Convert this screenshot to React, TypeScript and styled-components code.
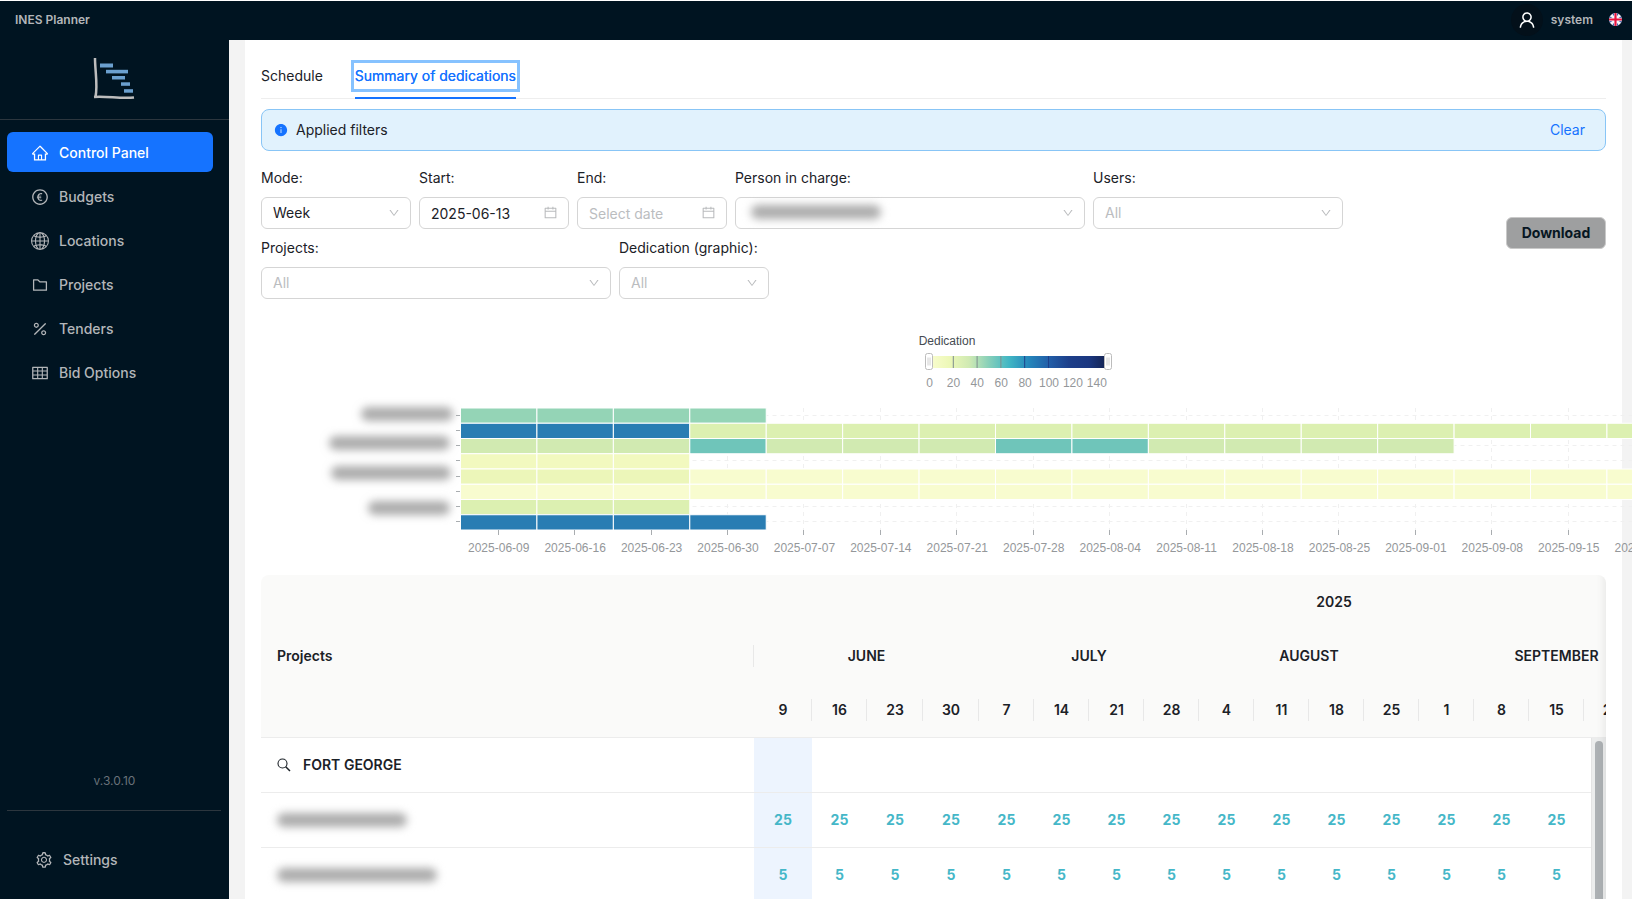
import React from "react";
import styled, { createGlobalStyle } from "styled-components";
import {
  AiFillInfoCircle,
  AiOutlineCalendar,
  AiOutlineDown,
  AiOutlineEuroCircle,
  AiOutlineFolder,
  AiOutlineHome,
  AiOutlinePercentage,
  AiOutlineSetting,
  AiOutlineTable,
  AiOutlineUser,
} from "react-icons/ai";
import { BsGlobe2 } from "react-icons/bs";

const GlobalStyle = createGlobalStyle`
  *, *::before, *::after { box-sizing: border-box; }
  body {
    margin: 0;
    background: #ffffff;
    color: #1b2127;
    font: 400 14px/22px Inter, "Liberation Sans", sans-serif;
  }
  button, input, select { font: inherit; color: inherit; margin: 0; }
`;

const Page = styled.div`
  display: flex;
  flex-direction: column;
  height: 100vh;
  overflow: hidden;
  border-top: 1px solid #ffffff;
`;

const Header = styled.header`
  display: flex;
  align-items: center;
  justify-content: space-between;
  flex: none;
  height: 39px;
  padding: 0 10px 2px 15px;
  background: #001421;
  color: #b3b6b9;
  font-size: 12px;
  font-weight: 600;
`;

const HeaderTools = styled.div`
  display: flex;
  align-items: center;
`;

const Avatar = styled.span`
  display: grid;
  place-items: center;
  width: 32px;
  height: 32px;
  border-radius: 50%;
  background: #03101a;
  color: #ffffff;
  font-size: 20px;
`;

const UserName = styled.span`
  margin: 0 16px 0 8px;
`;

const Body = styled.div`
  display: flex;
  flex: 1;
  min-height: 0;
`;

const Sidebar = styled.aside`
  display: flex;
  flex-direction: column;
  flex: none;
  width: 229px;
  background: #001421;
`;

const LogoArea = styled.div`
  display: flex;
  justify-content: center;
  height: 80px;
  padding-top: 17px;
  border-bottom: 1px solid #2c363e;
`;

const Nav = styled.nav`
  display: flex;
  flex-direction: column;
  gap: 4px;
  flex: 1;
  padding: 12px 16px 0 7px;
`;

const NavLink = styled.a<{ $active?: boolean }>`
  display: flex;
  align-items: center;
  gap: 10px;
  height: 40px;
  padding: 1px 0 0 24px;
  border-radius: 6px;
  background: ${(p) => (p.$active ? "#1573ff" : "transparent")};
  color: ${(p) => (p.$active ? "#ffffff" : "#b3b6b9")};
  font-weight: 500;
  text-decoration: none;

  svg { font-size: 18px; flex: none; }
`;

const Version = styled.div`
  padding-bottom: 18px;
  color: #69727a;
  font-size: 12px;
  text-align: center;
`;

const SidebarFooter = styled.div`
  margin: 0 8px 0 7px;
  padding: 28px 4px 20px;
  border-top: 1px solid #2c363e;
`;

const Main = styled.main`
  flex: 1;
  min-width: 0;
  padding: 0 10px 0 16px;
  overflow: hidden;
  background: #f3f3f3;
`;

const Card = styled.div`
  min-height: 100%;
  padding: 12px 16px 0;
  background: #ffffff;
`;

const Tabs = styled.div`
  display: flex;
  gap: 32px;
  margin-bottom: 10px;
  border-bottom: 1px solid #eeeeee;
`;

const Tab = styled.button<{ $active?: boolean }>`
  position: relative;
  height: 46px;
  padding: 2px 0 0;
  border: 0;
  background: none;
  color: ${(p) => (p.$active ? "#1573ff" : "#1b2127")};
  text-shadow: ${(p) => (p.$active ? "0 0 0 currentcolor" : "none")};

  span {
    display: block;
    padding: 1px 0;
    outline: ${(p) => (p.$active ? "3px solid #86c2ff" : "none")};
    outline-offset: 1px;
  }

  &::after {
    content: "";
    position: absolute;
    inset: auto 0 -1px;
    height: 2px;
    background: ${(p) => (p.$active ? "#1573ff" : "transparent")};
  }
`;

const Alert = styled.div`
  display: flex;
  align-items: center;
  gap: 8px;
  height: 42px;
  padding: 0 20px 0 12px;
  border: 1px solid #88c5f6;
  border-radius: 8px;
  background: #e1f2fd;

  svg { color: #1573ff; }
`;

const ClearButton = styled.button`
  margin-left: auto;
  padding: 0;
  border: 0;
  background: none;
  color: #1573ff;
`;

const FilterBar = styled.div`
  display: flex;
  align-items: center;
  gap: 16px;
  margin: 16px 0 30px;
`;

const Filters = styled.form`
  display: flex;
  flex: 1;
  flex-wrap: wrap;
  gap: 8px;
`;

const Field = styled.div<{ $width: number }>`
  display: flex;
  flex-direction: column;
  gap: 8px;
  width: ${(p) => p.$width}px;
`;

const Control = styled.div<{ $muted?: boolean }>`
  position: relative;
  color: ${(p) => (p.$muted ? "#bbbdbf" : "#1b2127")};

  select, input {
    display: block;
    width: 100%;
    height: 32px;
    padding: 0 11px;
    border: 1px solid #d5d5d5;
    border-radius: 6px;
    background: #ffffff;
    appearance: none;
  }
  input::placeholder { color: #bbbdbf; opacity: 1; }

  > svg {
    position: absolute;
    top: 10px;
    right: 11px;
    color: #b9bbbd;
    font-size: 12px;
    pointer-events: none;
  }
  > input + svg { top: 8px; font-size: 15px; }
`;

const Redacted = styled.span<{ $width: number }>`
  display: block;
  width: ${(p) => p.$width}px;
  height: 14px;
  border-radius: 7px;
  background: #acacac;
  filter: blur(4px);
`;

const SelectValue = styled.div`
  position: absolute;
  top: 8px;
  left: 16px;
  pointer-events: none;
`;

const DownloadButton = styled.button`
  width: 100px;
  height: 32px;
  padding: 0;
  border: 1px solid #c9c9c9;
  border-radius: 6px;
  background: #9e9fa0;
  color: #071622;
  font-weight: 700;
`;

const ChartArea = styled.div`
  height: 246px;

  svg { display: block; overflow: visible; }
  text { font: 12px "Liberation Sans", Arial, sans-serif; text-anchor: middle; }
`;

const TableWrap = styled.div`
  position: relative;
  overflow: hidden;
  border-radius: 8px 8px 0 0;
`;

const EdgeShadow = styled.div`
  position: absolute;
  inset: 0 0 0 auto;
  width: 10px;
  box-shadow: inset -10px 0 8px -8px rgba(5, 5, 5, 0.08);
`;

const ScrollTrack = styled.div`
  position: absolute;
  inset: 163px 0 0 auto;
  width: 15px;
  padding: 3px 3px 0;
  border-left: 1px solid #e4e4e4;
  background: #eceded;
`;

const ScrollThumb = styled.div`
  height: 600px;
  border-radius: 4px;
  background: #adb1b4;
`;

const Table = styled.table`
  width: 1653px;
  table-layout: fixed;
  border-collapse: separate;
  border-spacing: 0;
`;

const HeadCell = styled.th<{ $left?: boolean; $divider?: boolean; $last?: boolean }>`
  height: ${(p) => (p.$last ? 55 : 54)}px;
  padding: 0 ${(p) => (p.$left ? 16 : 0)}px;
  border-bottom: ${(p) => (p.$last ? "1px solid #ececec" : "0")};
  background: #fafaf9
    ${(p) => (p.$divider ? "linear-gradient(#e8e8e8, #e8e8e8) right center / 1px 22px no-repeat" : "")};
  font-weight: 600;
  text-align: ${(p) => (p.$left ? "left" : "center")};
`;

const Cell = styled.td<{ $left?: boolean; $current?: boolean }>`
  height: 55px;
  padding: 0 ${(p) => (p.$left ? 16 : 0)}px;
  border-bottom: 1px solid #ececec;
  background: ${(p) => (p.$current ? "#edf4fe" : "#ffffff")};
  color: ${(p) => (p.$left ? "#1b2127" : "#45b7c8")};
  font-weight: 700;
  text-align: ${(p) => (p.$left ? "left" : "center")};
`;

const ProjectName = styled.div`
  display: flex;
  align-items: center;
  gap: 12px;
  font-weight: 600;
`;

const Logo = () => (
  <svg width="43" height="43" viewBox="0 0 43 43" aria-label="INES Planner logo">
    <path d="M2 1 C2 14 5 28 2.500 40 M1 40 C14 39 28 42 41 40.500" fill="none" stroke="#bdbdbd" strokeWidth="2.500" />
    <g fill="#6ba0cf">
      <rect x="7" y="6.500" width="13" height="4" />
      <rect x="13" y="12.800" width="22" height="3.600" />
      <rect x="19" y="19" width="13" height="3.500" />
      <rect x="28" y="25.300" width="9" height="3.500" />
      <rect x="31" y="32.200" width="9" height="3.500" />
    </g>
  </svg>
);

const Flag = () => (
  <svg width="13" height="13" viewBox="0 0 12 12" aria-label="English">
    <clipPath id="flag-disc"><circle cx="6" cy="6" r="6" /></clipPath>
    <g clipPath="url(#flag-disc)">
      <rect width="12" height="12" fill="#f4f4f8" />
      <path d="M2.800 0H4.500V3zM7.500 0H9.200L7.500 3zM0 2.800L3.200 4.400H0zM12 2.800L8.800 4.400H12zM0 7.600H3.200L0 9.200zM12 7.600H8.800L12 9.200zM2.800 12H4.500V9zM9.200 12H7.500V9z" fill="#2446a0" />
      <path d="M5 0H7V5H12V7H7V12H5V7H0V5H5z" fill="#e8123c" />
    </g>
  </svg>
);

const SearchIcon = () => (
  <svg width="14" height="14" viewBox="0 0 14 14" fill="none" stroke="#1b2127" aria-hidden="true">
    <circle cx="5.500" cy="5.500" r="4.500" strokeWidth="1.100" />
    <path d="M8.700 8.700L13 13" strokeWidth="1.500" />
  </svg>
);

const navItems = [
  { label: "Control Panel", icon: <AiOutlineHome />, active: true },
  { label: "Budgets", icon: <AiOutlineEuroCircle /> },
  { label: "Locations", icon: <BsGlobe2 /> },
  { label: "Projects", icon: <AiOutlineFolder /> },
  { label: "Tenders", icon: <AiOutlinePercentage /> },
  { label: "Bid Options", icon: <AiOutlineTable /> },
];

type SelectFieldProps = { id: string; label: string; value: string; width: number; muted?: boolean; redacted?: boolean };

const SelectField = ({ id, label, value, width, muted, redacted }: SelectFieldProps) => (
  <Field $width={width}>
    <label htmlFor={id}>{label}</label>
    <Control $muted={muted}>
      <select id={id}><option>{value}</option></select>
      {redacted && <SelectValue><Redacted $width={130} /></SelectValue>}
      <AiOutlineDown />
    </Control>
  </Field>
);

type DateFieldProps = { id: string; label: string; value?: string };

const DateField = ({ id, label, value }: DateFieldProps) => (
  <Field $width={150}>
    <label htmlFor={id}>{label}</label>
    <Control>
      <input id={id} type="text" placeholder="Select date" defaultValue={value} />
      <AiOutlineCalendar />
    </Control>
  </Field>
);

/* Heat map: each run is [first week, number of weeks, colour]. */
type Run = [number, number, string];
const heatRows: Run[][] = [
  [[0, 4, "#94d4b6"]],
  [[0, 3, "#297db3"], [3, 13, "#dcf0b1"]],
  [[0, 3, "#d1eab1"], [3, 1, "#6fc5ba"], [4, 3, "#d1eab1"], [7, 2, "#6fc5ba"], [9, 4, "#d1eab1"]],
  [[0, 3, "#f2f9bf"]],
  [[0, 3, "#ecf6b9"], [3, 13, "#f8fccf"]],
  [[0, 16, "#f8fccf"]],
  [[0, 3, "#dcf0b1"]],
  [[0, 4, "#297db3"]],
];
const weekLabels = [
  "2025-06-09", "2025-06-16", "2025-06-23", "2025-06-30", "2025-07-07", "2025-07-14",
  "2025-07-21", "2025-07-28", "2025-08-04", "2025-08-11", "2025-08-18", "2025-08-25",
  "2025-09-01", "2025-09-08", "2025-09-15", "2025-09-22",
];
const chart = { left: 199.5, top: 79, colWidth: 76.43, rowHeight: 15.25 };
const colX = (i: number) => chart.left + i * chart.colWidth;
const rowY = (i: number) => chart.top + i * chart.rowHeight;
const rampColors = ["#fafdd0", "#edf8b8", "#d0eab3", "#86cfb9", "#41b6c4", "#2586bb", "#225ea8", "#1d3f8a", "#1b3780", "#13204a"];
const hiddenNames = [
  { x: 100, y: 78, width: 92 },
  { x: 68, y: 107, width: 121 },
  { x: 70, y: 137, width: 120 },
  { x: 107, y: 172, width: 82 },
];

const HeatMap = () => {
  const right = colX(weekLabels.length);
  const bottom = rowY(heatRows.length);
  return (
    <ChartArea>
      <svg width="100%" height="246" role="img" aria-label="Dedication per week">
        <defs>
          <linearGradient id="ramp">
            {rampColors.map((c, i) => <stop key={c} offset={i / (rampColors.length - 1)} stopColor={c} />)}
          </linearGradient>
          <filter id="soften" x="-20%" y="-150%" width="140%" height="400%"><feGaussianBlur stdDeviation="4" /></filter>
        </defs>

        <text x="686" y="16" fill="#454b52">Dedication</text>
        <rect x="668" y="27" width="180" height="12" fill="url(#ramp)" />
        {[1, 2, 3, 4, 5].map((i) => (
          <line key={i} x1={668.5 + i * 23.8} x2={668.5 + i * 23.8} y1="27" y2="39" stroke={i < 4 ? "#7d8d8d" : "#1d3f8a"} />
        ))}
        {[664.5, 843.5].map((x) => (
          <g key={x} stroke="#bcbcbc">
            <rect x={x} y="24.500" width="7" height="16" rx="2" fill="#ffffff" />
            <path d={`M${x + 2.5} 28.500v8M${x + 4.5} 28.500v8`} stroke="#d0d0d0" />
          </g>
        ))}
        {[0, 20, 40, 60, 80, 100, 120, 140].map((n, i) => (
          <text key={n} x={668.5 + i * 23.9} y="58" fill="#94979a">{n}</text>
        ))}

        <g stroke="#f0f0f0" strokeDasharray="4 4">
          {heatRows.map((_, i) => <line key={i} x1={chart.left} x2={right} y1={Math.round(rowY(i + 0.5)) - 0.5} y2={Math.round(rowY(i + 0.5)) - 0.5} />)}
          {weekLabels.map((w, i) => <line key={w} x1={Math.round(colX(i + 0.5)) - 0.5} x2={Math.round(colX(i + 0.5)) - 0.5} y1={chart.top} y2={bottom} />)}
        </g>
        <g stroke="#ffffff">
          {heatRows.map((runs, r) => runs.flatMap(([start, count, color]) =>
            Array.from({ length: count }, (_, k) => (
              <rect key={`${r}-${start + k}`} x={colX(start + k)} y={rowY(r)} width={chart.colWidth} height={chart.rowHeight} fill={color} />
            )),
          ))}
        </g>
        <g stroke="#a9adb0">
          {heatRows.map((_, i) => <line key={i} x1="195" x2="199" y1={Math.round(rowY(i + 0.5)) - 0.5} y2={Math.round(rowY(i + 0.5)) - 0.5} />)}
          {weekLabels.map((w, i) => <line key={w} x1={Math.round(colX(i + 0.5)) - 0.5} x2={Math.round(colX(i + 0.5)) - 0.5} y1={bottom} y2={bottom + 5} />)}
        </g>
        {weekLabels.map((w, i) => <text key={w} x={colX(i + 0.5)} y="223" fill="#94979a">{w}</text>)}
        <g fill="#acacac" filter="url(#soften)">
          {hiddenNames.map((n) => <rect key={n.y} x={n.x} y={n.y} width={n.width} height="14" rx="7" />)}
        </g>
      </svg>
    </ChartArea>
  );
};

const months = [
  { name: "JUNE", days: [9, 16, 23, 30] },
  { name: "JULY", days: [7, 14, 21, 28] },
  { name: "AUGUST", days: [4, 11, 18, 25] },
  { name: "SEPTEMBER", days: [1, 8, 15, 22, 29] },
  { name: "OCTOBER", days: [6, 13, 20, 27] },
];
const days = months.flatMap((m) => m.days);
const dayWidths = [58, 55, 56, 56];
const hours = [
  { value: 25, nameWidth: 130 },
  { value: 5, nameWidth: 160 },
];

const DedicationTable = () => (
  <TableWrap>
    <Table>
      <colgroup>
        <col width={493} />
        {days.map((d, i) => <col key={i} width={dayWidths[i] ?? 55} />)}
      </colgroup>
      <thead>
        <tr>
          <HeadCell rowSpan={3} $left $divider $last>Projects</HeadCell>
          <HeadCell colSpan={days.length}>2025</HeadCell>
        </tr>
        <tr>{months.map((m) => <HeadCell key={m.name} colSpan={m.days.length}>{m.name}</HeadCell>)}</tr>
        <tr>{days.map((d, i) => <HeadCell key={i} $divider $last>{d}</HeadCell>)}</tr>
      </thead>
      <tbody>
        <tr>
          <Cell $left><ProjectName><SearchIcon />FORT GEORGE</ProjectName></Cell>
          {days.map((d, i) => <Cell key={i} $current={i === 0} />)}
        </tr>
        {hours.map((row) => (
          <tr key={row.value}>
            <Cell $left><Redacted $width={row.nameWidth} /></Cell>
            {days.map((d, i) => <Cell key={i} $current={i === 0}>{row.value}</Cell>)}
          </tr>
        ))}
      </tbody>
    </Table>
    <ScrollTrack><ScrollThumb /></ScrollTrack>
    <EdgeShadow />
  </TableWrap>
);

export default function App() {
  return (
    <>
      <GlobalStyle />
      <Page>
        <Header>
          <span>INES Planner</span>
          <HeaderTools>
            <Avatar><AiOutlineUser /></Avatar>
            <UserName>system</UserName>
            <Flag />
          </HeaderTools>
        </Header>
        <Body>
          <Sidebar>
            <LogoArea><Logo /></LogoArea>
            <Nav>
              {navItems.map((item) => (
                <NavLink key={item.label} href="#" $active={item.active}>{item.icon}{item.label}</NavLink>
              ))}
            </Nav>
            <Version>v.3.0.10</Version>
            <SidebarFooter>
              <NavLink href="#"><AiOutlineSetting />Settings</NavLink>
            </SidebarFooter>
          </Sidebar>
          <Main>
            <Card>
              <Tabs>
                <Tab>Schedule</Tab>
                <Tab $active><span>Summary of dedications</span></Tab>
              </Tabs>
              <Alert>
                <AiFillInfoCircle />
                Applied filters
                <ClearButton>Clear</ClearButton>
              </Alert>
              <FilterBar>
                <Filters>
                  <SelectField id="mode" label="Mode:" value="Week" width={150} />
                  <DateField id="start" label="Start:" value="2025-06-13" />
                  <DateField id="end" label="End:" />
                  <SelectField id="person" label="Person in charge:" value="" width={350} redacted />
                  <SelectField id="users" label="Users:" value="All" width={250} muted />
                  <SelectField id="projects" label="Projects:" value="All" width={350} muted />
                  <SelectField id="dedication" label="Dedication (graphic):" value="All" width={150} muted />
                </Filters>
                <DownloadButton>Download</DownloadButton>
              </FilterBar>
              <HeatMap />
              <DedicationTable />
            </Card>
          </Main>
        </Body>
      </Page>
    </>
  );
}
